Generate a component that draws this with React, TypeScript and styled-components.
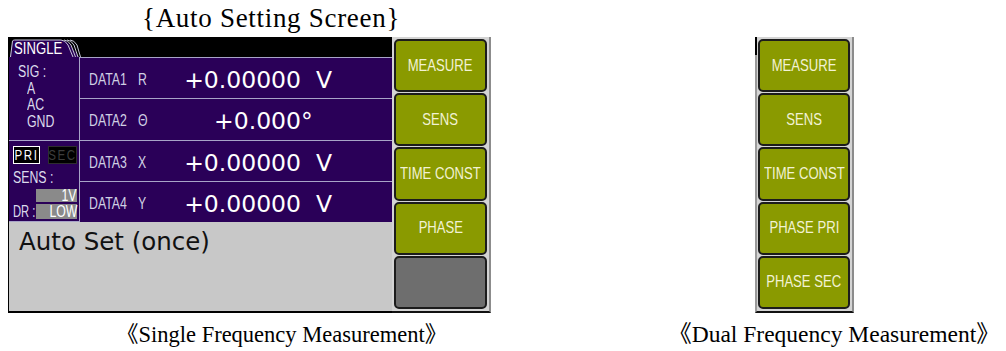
import React from 'react';
import styled, { createGlobalStyle } from 'styled-components';

const GlobalStyle = createGlobalStyle`
  body {
    margin: 0;
    background: #fff;
  }
`;

const Page = styled.div`
  width: 1006px;
  height: 351px;
  overflow: hidden;
  background: #fff;
  font-family: "Liberation Serif", "Noto Sans CJK JP", serif;
  color: #000;
`;

const Title = styled.div`
  height: 37px;
  box-sizing: border-box;
  padding: 3px 0 0 142px;
  font-size: 27px;
  line-height: 30px;
  letter-spacing: 0.7px;
`;

const Main = styled.div`
  display: flex;
  align-items: flex-start;
  padding-left: 8px;
`;

const Screen = styled.div`
  display: flex;
  width: 483px;
  height: 276px;
`;

const MainArea = styled.div`
  width: 384px;
  display: flex;
  flex-direction: column;
`;

// instrument LCD font: tall narrow sans, squeezed horizontally
const Narrow = styled.span<{ $origin?: string; $sx?: number }>`
  display: inline-block;
  font-family: "Liberation Sans", sans-serif;
  white-space: nowrap;
  transform: scaleX(${({ $sx }) => $sx ?? 0.77});
  transform-origin: ${({ $origin }) => $origin ?? 'left'} center;
`;

const TopBar = styled.div`
  height: 20px;
  background: #000;
  display: flex;
  align-items: flex-end;
  padding-left: 2px;
`;

const Tab = styled.div`
  position: relative;
  width: 72px;
  height: 18px;
`;

const TabShape = styled.svg`
  position: absolute;
  left: 0;
  top: 0;
`;

const TabLabel = styled(Narrow)`
  position: relative;
  padding: 1px 0 0 5px;
  font-size: 16px;
  line-height: 17px;
  color: #fff;
`;

const DataArea = styled.div`
  height: 165px;
  display: flex;
  background: #2a0058;
  border-left: 1px solid #000;
`;

const Side = styled.div`
  width: 70px;
  display: flex;
  flex-direction: column;
  border-right: 1px solid #a8a4c8;
  font-size: 16px;
  color: #dcdcec;
`;

const SigBlock = styled.div`
  height: 83px;
  box-sizing: border-box;
  padding: 7px 0 0 9px;
  line-height: 16.5px;
  display: flex;
  flex-direction: column;
  align-items: flex-start;
`;

const Indent = styled(Narrow)`
  margin-left: 9px;
`;

const SensBlock = styled.div`
  flex: 1;
  border-top: 1px solid #a8a4c8;
  border-bottom: 1px solid #a8a4c8;
  padding: 5px 0 0 4px;
  display: flex;
  flex-direction: column;
  align-items: flex-start;
`;

const FreqRow = styled.div`
  display: flex;
  gap: 8px;
  height: 18px;
`;

const FreqBox = styled.div<{ $on?: boolean; $w: number }>`
  width: ${({ $w }) => $w}px;
  height: 18px;
  box-sizing: border-box;
  display: flex;
  justify-content: center;
  background: #000;
  border: 1px solid ${({ $on }) => ($on ? '#fff' : '#2e2e2e')};
  color: ${({ $on }) => ($on ? '#fff' : '#3c3c3c')};
  font-size: 15px;
  line-height: 16px;
  letter-spacing: 2px;
`;

const SideText = styled(Narrow)`
  line-height: 17px;
  margin-top: 5px;
`;

const ValRow = styled.div<{ $gap: number }>`
  display: flex;
  align-items: center;
  margin-top: ${({ $gap }) => $gap}px;
`;

const ValLabel = styled.div`
  width: 23px;
  line-height: 14px;
`;

const ValBox = styled.div<{ $h: number }>`
  width: 41px;
  height: ${({ $h }) => $h}px;
  background: #8a8a8a;
  color: #fff;
  display: flex;
  justify-content: flex-end;
  font-size: 16px;
  line-height: ${({ $h }) => $h}px;
`;

const Rows = styled.div`
  flex: 1;
  display: flex;
  flex-direction: column;
  border-top: 1px solid #a8a4c8;
`;

const Row = styled.div<{ $first?: boolean }>`
  flex: 1;
  display: flex;
  align-items: center;
  padding: 4px 0 0 9px;
  border-top: ${({ $first }) => ($first ? 'none' : '1px solid #a8a4c8')};
`;

const Label = styled.span`
  width: 49px;
  font-size: 16px;
  color: #d0d0e4;
`;

const Sym = styled.span`
  width: 12px;
  font-size: 16px;
  color: #d0d0e4;
`;

const Value = styled.span`
  width: 151px;
  text-align: right;
  font-family: "DejaVu Sans", sans-serif;
  font-size: 23.5px;
  color: #fff;
`;

const Unit = styled.span<{ $gap: number }>`
  margin-left: ${({ $gap }) => $gap}px;
  font-family: "DejaVu Sans", sans-serif;
  font-size: 23.5px;
  color: #fff;
`;

const Message = styled.div`
  flex: 1;
  background: #c8c8c8;
  border-left: 1px solid #000;
  border-bottom: 2px solid #000;
  padding: 6px 0 0 10px;
  font-family: "DejaVu Sans", sans-serif;
  font-size: 24.5px;
  line-height: 28px;
  color: #111;
`;

const ButtonCol = styled.div<{ $offset?: number }>`
  width: 99px;
  height: 276px;
  box-sizing: border-box;
  margin-left: ${({ $offset }) => $offset ?? 0}px;
  padding: 2px;
  display: flex;
  flex-direction: column;
  gap: 1px;
  background: #d4d4d4;
  border-right: 2px solid #8c8c8c;
  border-bottom: 2px solid #111;
`;

const Panel = styled(ButtonCol)`
  position: relative;
  border-left: 2px solid #9a9a9a;
  padding-left: 1px;
  &::before {
    content: '';
    position: absolute;
    left: -2px;
    top: 0;
    width: 2px;
    height: 18px;
    background: #000;
  }
`;

const SoftKey = styled.div<{ $blank?: boolean }>`
  flex: 1;
  display: flex;
  align-items: center;
  justify-content: center;
  border: 2px solid #1c1c1c;
  border-radius: 5px;
  background: ${({ $blank }) => ($blank ? '#6e6e6e' : '#8a9a00')};
  font-size: 17px;
  color: #f2f2d4;
  overflow: hidden;
`;

const Captions = styled.div`
  display: flex;
  align-items: baseline;
  padding: 8px 0 0 116px;
  line-height: 27px;
  white-space: nowrap;
`;

const Caption = styled.span<{ $offset?: number; $size: number }>`
  margin-left: ${({ $offset }) => $offset ?? 0}px;
  font-size: ${({ $size }) => $size}px;
`;

const rows = [
  { label: 'DATA1', sym: 'R', value: '+0.00000', unit: 'V', gap: 15 },
  { label: 'DATA2', sym: 'Θ', value: '+0.000', unit: '°', gap: 0 },
  { label: 'DATA3', sym: 'X', value: '+0.00000', unit: 'V', gap: 15 },
  { label: 'DATA4', sym: 'Y', value: '+0.00000', unit: 'V', gap: 15 },
];

function SingleTab() {
  return (
    <Tab>
      <TabShape width="72" height="18" viewBox="0 0 72 18">
        <path d="M0 18 L2.5 2 Q3 1 4.5 1 L51 1 Q56 1 60 6 L69 18 Z" fill="#2a0058" />
        <path d="M0.5 18 L2.5 2 Q3 1 4.5 1 L51 1" fill="none" stroke="#c8c8d8" strokeWidth="1" />
        {[0, 1, 2, 3].map((i) => (
          <path
            key={i}
            d={`M${51 + i * 3} 1 Q${55 + i * 3} 1 ${58 + i * 3} 6 L${63 + i * 2.5} 18`}
            fill="none"
            stroke="#c8c8d8"
            strokeWidth="1"
          />
        ))}
      </TabShape>
      <TabLabel $sx={0.82}>SINGLE</TabLabel>
    </Tab>
  );
}

function Key({ children, blank }: { children?: React.ReactNode; blank?: boolean }) {
  return (
    <SoftKey $blank={blank}>
      {children && <Narrow $origin="center">{children}</Narrow>}
    </SoftKey>
  );
}

export default function App() {
  return (
    <Page>
      <GlobalStyle />
      <Title>{'{Auto Setting Screen}'}</Title>
      <Main>
        <Screen>
          <MainArea>
            <TopBar>
              <SingleTab />
            </TopBar>
            <DataArea>
              <Side>
                <SigBlock>
                  <Narrow>SIG :</Narrow>
                  <Indent>A</Indent>
                  <Indent>AC</Indent>
                  <Indent>GND</Indent>
                </SigBlock>
                <SensBlock>
                  <FreqRow>
                    <FreqBox $on $w={27}>
                      <Narrow $origin="center">PRI</Narrow>
                    </FreqBox>
                    <FreqBox $w={29}>
                      <Narrow $origin="center">SEC</Narrow>
                    </FreqBox>
                  </FreqRow>
                  <SideText>SENS :</SideText>
                  <ValRow $gap={3}>
                    <ValLabel />
                    <ValBox $h={13}>
                      <Narrow $origin="right">1V</Narrow>
                    </ValBox>
                  </ValRow>
                  <ValRow $gap={2}>
                    <ValLabel>
                      <Narrow $sx={0.7}>DR :</Narrow>
                    </ValLabel>
                    <ValBox $h={15}>
                      <Narrow $origin="right">LOW</Narrow>
                    </ValBox>
                  </ValRow>
                </SensBlock>
              </Side>
              <Rows>
                {rows.map((r, i) => (
                  <Row key={r.label} $first={i === 0}>
                    <Label>
                      <Narrow>{r.label}</Narrow>
                    </Label>
                    <Sym>
                      <Narrow>{r.sym}</Narrow>
                    </Sym>
                    <Value>{r.value}</Value>
                    <Unit $gap={r.gap}>{r.unit}</Unit>
                  </Row>
                ))}
              </Rows>
            </DataArea>
            <Message>Auto Set (once)</Message>
          </MainArea>
          <ButtonCol>
            <Key>MEASURE</Key>
            <Key>SENS</Key>
            <Key>TIME CONST</Key>
            <Key>PHASE</Key>
            <Key blank />
          </ButtonCol>
        </Screen>
        <Panel $offset={264}>
          <Key>MEASURE</Key>
          <Key>SENS</Key>
          <Key>TIME CONST</Key>
          <Key>PHASE PRI</Key>
          <Key>PHASE SEC</Key>
        </Panel>
      </Main>
      <Captions>
        <Caption $size={22.5}>《Single Frequency Measurement》</Caption>
        <Caption $size={23.5} $offset={221}>
          《Dual Frequency Measurement》
        </Caption>
      </Captions>
    </Page>
  );
}
